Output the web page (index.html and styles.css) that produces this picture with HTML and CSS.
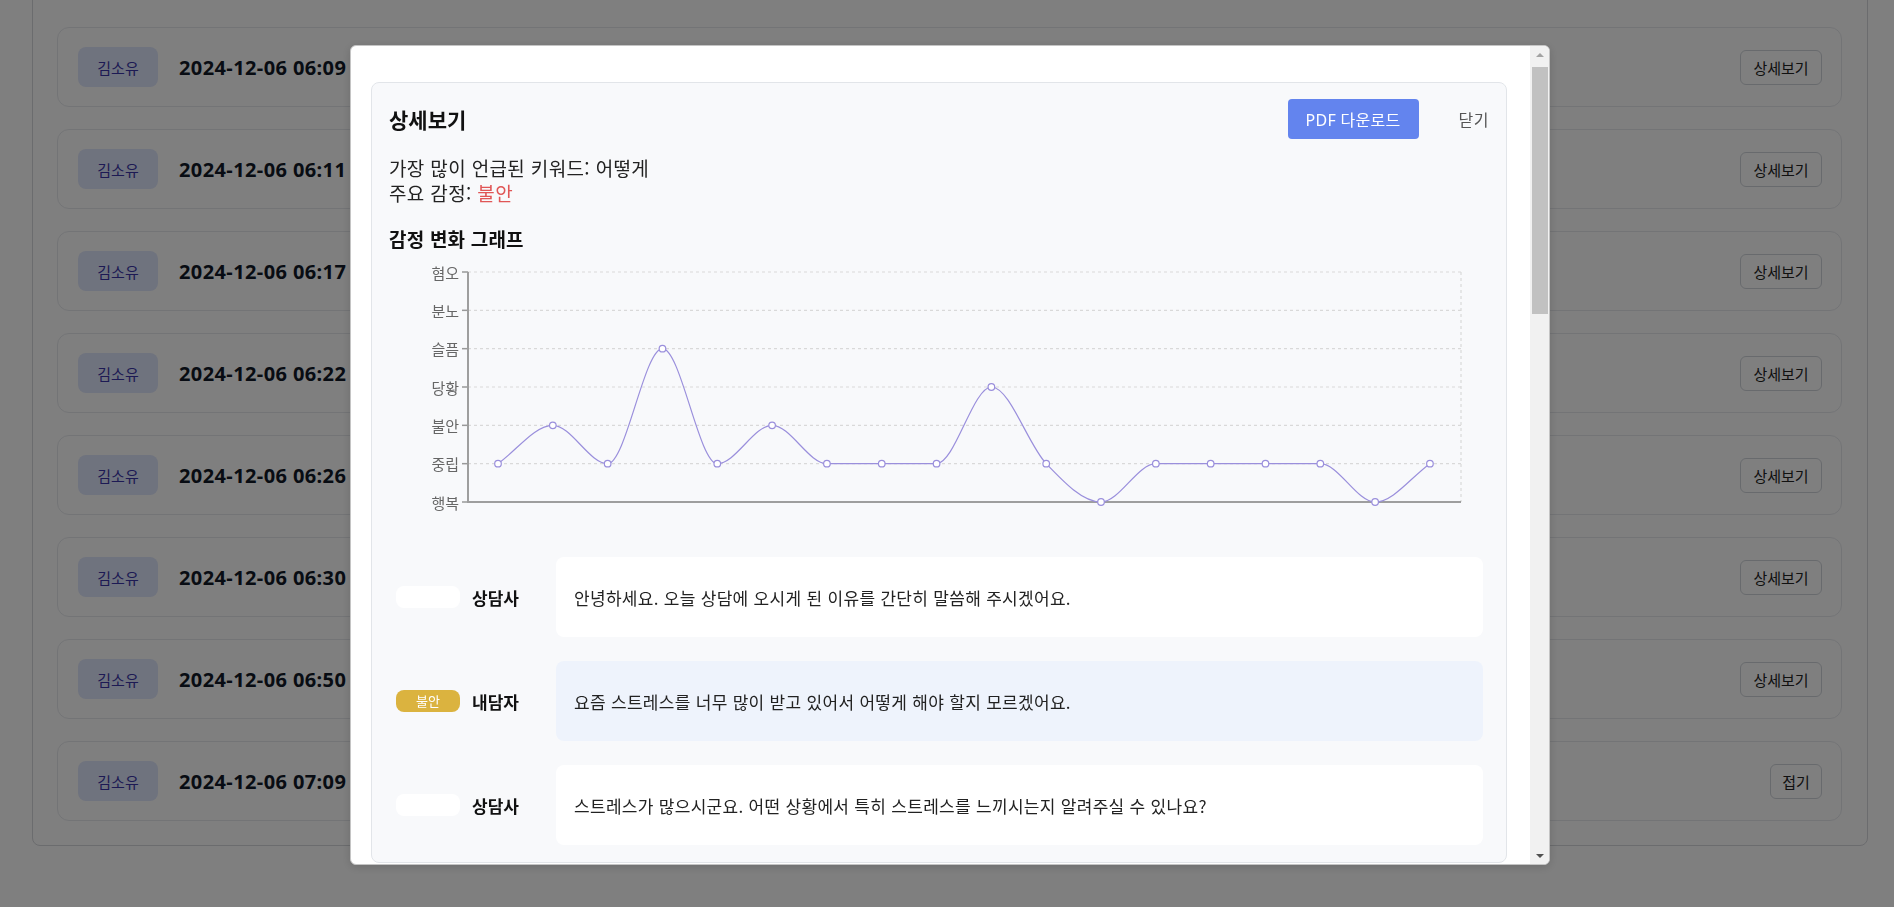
FILE: index.html
```html
<!DOCTYPE html>
<html lang="ko">
<head>
<meta charset="utf-8">
<title>상담 기록</title>
<link rel="stylesheet" href="styles.css">
</head>
<body>
<div class="page">
  <div class="list">
    <div class="card"><span class="name">김소유</span><span class="date">2024-12-06 06:09</span><button class="btn-outline">상세보기</button></div>
    <div class="card"><span class="name">김소유</span><span class="date">2024-12-06 06:11</span><button class="btn-outline">상세보기</button></div>
    <div class="card"><span class="name">김소유</span><span class="date">2024-12-06 06:17</span><button class="btn-outline">상세보기</button></div>
    <div class="card"><span class="name">김소유</span><span class="date">2024-12-06 06:22</span><button class="btn-outline">상세보기</button></div>
    <div class="card"><span class="name">김소유</span><span class="date">2024-12-06 06:26</span><button class="btn-outline">상세보기</button></div>
    <div class="card"><span class="name">김소유</span><span class="date">2024-12-06 06:30</span><button class="btn-outline">상세보기</button></div>
    <div class="card"><span class="name">김소유</span><span class="date">2024-12-06 06:50</span><button class="btn-outline">상세보기</button></div>
    <div class="card"><span class="name">김소유</span><span class="date">2024-12-06 07:09</span><button class="btn-outline btn-fold">접기</button></div>
  </div>
</div>

<div class="overlay">
  <div class="modal">
    <div class="modal-body">
      <div class="panel">
        <div class="panel-head">
          <h2 class="panel-title">상세보기</h2>
          <div class="head-actions">
            <button class="btn-primary">PDF 다운로드</button>
            <button class="btn-text">닫기</button>
          </div>
        </div>
        <div class="summary">
          <p>가장 많이 언급된 키워드: 어떻게</p>
          <p>주요 감정: <span class="emo-red">불안</span></p>
        </div>
        <h3 class="chart-title">감정 변화 그래프</h3>
        <svg class="chart" width="1100" height="267" viewBox="0 0 1100 267">
          <g class="grid">
            <line x1="79" y1="20" x2="1072" y2="20"/>
            <line x1="79" y1="58.33" x2="1072" y2="58.33"/>
            <line x1="79" y1="96.67" x2="1072" y2="96.67"/>
            <line x1="79" y1="135" x2="1072" y2="135"/>
            <line x1="79" y1="173.33" x2="1072" y2="173.33"/>
            <line x1="79" y1="211.67" x2="1072" y2="211.67"/>
            <line x1="1072" y1="20" x2="1072" y2="250"/>
          </g>
          <g class="ticks">
            <line x1="73" y1="20" x2="79" y2="20"/>
            <line x1="73" y1="58.33" x2="79" y2="58.33"/>
            <line x1="73" y1="96.67" x2="79" y2="96.67"/>
            <line x1="73" y1="135" x2="79" y2="135"/>
            <line x1="73" y1="173.33" x2="79" y2="173.33"/>
            <line x1="73" y1="211.67" x2="79" y2="211.67"/>
            <line x1="73" y1="250" x2="79" y2="250"/>
          </g>
          <g class="axis">
            <line x1="79" y1="20" x2="79" y2="251"/>
            <line x1="78" y1="250" x2="1072" y2="250"/>
          </g>
          <g class="labels">
            <text x="70" y="20">혐오</text>
            <text x="70" y="58.33">분노</text>
            <text x="70" y="96.67">슬픔</text>
            <text x="70" y="135">당황</text>
            <text x="70" y="173.33">불안</text>
            <text x="70" y="211.67">중립</text>
            <text x="70" y="250">행복</text>
          </g>
          <g id="series" class="series"></g>
        </svg>
        <div class="messages">
          <div class="msg">
            <div class="who"><span class="tag"></span><span class="role">상담사</span></div>
            <div class="bubble">안녕하세요. 오늘 상담에 오시게 된 이유를 간단히 말씀해 주시겠어요.</div>
          </div>
          <div class="msg">
            <div class="who"><span class="tag tag-anxious">불안</span><span class="role">내담자</span></div>
            <div class="bubble bubble-client">요즘 스트레스를 너무 많이 받고 있어서 어떻게 해야 할지 모르겠어요.</div>
          </div>
          <div class="msg">
            <div class="who"><span class="tag"></span><span class="role">상담사</span></div>
            <div class="bubble">스트레스가 많으시군요. 어떤 상황에서 특히 스트레스를 느끼시는지 알려주실 수 있나요?</div>
          </div>
        </div>
      </div>
    </div>
    <div class="scrollbar">
      <div class="sb-btn"><span class="arrow-up"></span></div>
      <div class="sb-track"><div class="sb-thumb"></div></div>
      <div class="sb-btn"><span class="arrow-down"></span></div>
    </div>
  </div>
</div>
<script src="script.js"></script>
</body>
</html>
```

FILE: styles.css
```css
* { box-sizing: border-box; }
html, body { margin: 0; padding: 0; }
body {
  font-family: "Noto Sans", "Noto Sans CJK KR", sans-serif;
  background: #fff;
  color: #111;
  height: 907px;
  overflow: hidden;
}
button { font-family: inherit; cursor: pointer; }

/* background list */
.page { padding: 0 26px 0 32px; }
.list {
  margin-top: -20px;
  border: 1px solid #d6d8dc;
  border-radius: 8px;
  padding: 46px 25px 24px 24px;
  display: flex;
  flex-direction: column;
  gap: 22px;
  background: #fff;
}
.card {
  display: flex;
  align-items: center;
  height: 80px;
  border: 1px solid #e7e9ed;
  border-radius: 12px;
  padding: 0 19px 0 20px;
  background: #fff;
}
.name {
  width: 80px;
  height: 40px;
  border-radius: 8px;
  background: #dfe6fc;
  color: #3a35a8;
  font-family: "Noto Sans CJK KR", sans-serif;
  font-size: 15px;
  display: flex;
  align-items: center;
  justify-content: center;
}
.date {
  margin-left: 21px;
  font-weight: 700;
  font-size: 20px;
  letter-spacing: 0.4px;
  color: #111827;
}
.btn-outline {
  margin-left: auto;
  height: 35px;
  width: 82px;
  border: 1px solid #d1d5db;
  border-radius: 6px;
  background: #fff;
  color: #222;
  font-family: "Noto Sans CJK KR", sans-serif;
  font-size: 15px;
  padding: 0;
}
.btn-fold { width: 52px; }

/* overlay + modal */
.overlay {
  position: fixed;
  inset: 0;
  background: rgba(0, 0, 0, 0.5);
  display: flex;
  justify-content: center;
  align-items: flex-start;
  padding: 45px 0 0 6px;
}
.modal {
  width: 1200px;
  height: 820px;
  background: #fff;
  border: 1px solid #c4c4c4;
  border-radius: 6px;
  display: flex;
  overflow: hidden;
  box-shadow: 0 2px 10px rgba(0, 0, 0, 0.15);
}
.modal-body {
  flex: 1;
  overflow: hidden;
  padding: 36px 23px 0 20px;
  font-family: "Noto Sans CJK KR", sans-serif;
}
.panel {
  background: #f8f9fb;
  border: 1px solid #e2e5e9;
  border-radius: 8px;
  padding: 16px 17px 17px 17px;
}
.panel-head {
  display: flex;
  align-items: center;
  justify-content: space-between;
  height: 40px;
}
.panel-title {
  margin: 0;
  font-size: 21px;
  font-weight: 700;
  line-height: 40px;
  color: #111;
}
.head-actions {
  display: flex;
  align-items: center;
  gap: 40px;
}
.btn-primary {
  height: 40px;
  width: 131px;
  padding: 0;
  border: none;
  border-radius: 4px;
  background: #6384ee;
  color: #fff;
  font-size: 16px;
  letter-spacing: 0.3px;
  font-family: "Noto Sans", "Noto Sans CJK KR", sans-serif;
}
.btn-text {
  border: none;
  background: none;
  padding: 0;
  font-size: 16px;
  letter-spacing: 0.5px;
  color: #555;
  font-family: "Noto Sans CJK KR", sans-serif;
}
.summary { margin-top: 16px; }
.summary p {
  margin: 0;
  font-size: 19px;
  letter-spacing: 0.35px;
  line-height: 25px;
  color: #222;
}
.emo-red { color: #e05656; }
.chart-title {
  margin: 21px 0 1px;
  font-size: 19px;
  letter-spacing: 0.2px;
  font-weight: 700;
  line-height: 25px;
  color: #111;
}
.chart { display: block; }
.chart .grid line { stroke: #d9d9d9; stroke-width: 1.2; stroke-dasharray: 3 3; }
.chart .ticks line { stroke: #999; stroke-width: 1.5; }
.chart .axis line { stroke: #9e9e9e; stroke-width: 2; }
.chart .labels text {
  font-family: "Noto Sans CJK KR", sans-serif;
  font-size: 15px;
  fill: #666;
  text-anchor: end;
  dominant-baseline: central;
}
.chart .series path { fill: none; stroke: #9a8fdc; stroke-width: 1.2; }
.chart .series circle { fill: #fff; stroke: #9a8fdc; stroke-width: 1.2; }

.messages {
  margin-top: 38px;
  display: flex;
  flex-direction: column;
  gap: 24px;
}
.msg { display: flex; align-items: center; }
.who {
  width: 167px;
  flex: none;
  display: flex;
  align-items: center;
  gap: 12px;
  padding-left: 7px;
}
.tag {
  width: 64px;
  height: 22px;
  border-radius: 8px;
  background: #fff;
  color: #fff;
  font-size: 13px;
  line-height: 22px;
  text-align: center;
}
.tag-anxious { background: #dbb33f; }
.role { font-size: 17px; font-weight: 700; color: #111; }
.bubble {
  flex: 1;
  height: 80px;
  margin-right: 6px;
  background: #fff;
  border-radius: 8px;
  display: flex;
  align-items: center;
  padding: 0 18px;
  font-size: 17px;
  letter-spacing: 0.3px;
  color: #222;
}
.bubble-client { background: #eef3fc; }

/* fake scrollbar */
.scrollbar {
  width: 19px;
  flex: none;
  background: #f1f1f1;
  display: flex;
  flex-direction: column;
}
.sb-btn {
  height: 17px;
  display: flex;
  align-items: center;
  justify-content: center;
}
.arrow-up {
  width: 0; height: 0;
  border-left: 4px solid transparent;
  border-right: 4px solid transparent;
  border-bottom: 4px solid #a3a3a3;
}
.arrow-down {
  width: 0; height: 0;
  border-left: 4px solid transparent;
  border-right: 4px solid transparent;
  border-top: 4px solid #505050;
}
.sb-track { flex: 1; padding: 4px 1px 0 2px; }
.sb-thumb { height: 247px; background: #c1c1c1; }
```

FILE: script.js
```js
(function () {
  var data = [1, 2, 1, 4, 1, 2, 1, 1, 1, 3, 1, 0, 1, 1, 1, 1, 0, 1];
  var x0 = 109, dx = 54.82, yb = 250, dy = 230 / 6;
  var pts = data.map(function (v, i) { return { x: x0 + i * dx, y: yb - v * dy }; });
  var n = pts.length;
  // monotone cubic interpolation (Fritsch-Carlson)
  var delta = [], m = [];
  for (var i = 0; i < n - 1; i++) {
    delta[i] = (pts[i + 1].y - pts[i].y) / (pts[i + 1].x - pts[i].x);
  }
  for (i = 0; i < n; i++) {
    if (i === 0) m[i] = delta[0];
    else if (i === n - 1) m[i] = delta[n - 2];
    else if (Math.sign(delta[i - 1]) !== Math.sign(delta[i])) m[i] = 0;
    else m[i] = (delta[i - 1] + delta[i]) / 2;
  }
  for (i = 0; i < n - 1; i++) {
    if (delta[i] === 0) { m[i] = 0; m[i + 1] = 0; continue; }
    var a = m[i] / delta[i], b = m[i + 1] / delta[i], s = a * a + b * b;
    if (s > 9) {
      var tau = 3 / Math.sqrt(s);
      m[i] = a * tau * delta[i];
      m[i + 1] = b * tau * delta[i];
    }
  }
  var d = 'M' + pts[0].x + ' ' + pts[0].y;
  for (i = 0; i < n - 1; i++) {
    var h = (pts[i + 1].x - pts[i].x) / 3;
    d += ' C' + (pts[i].x + h) + ' ' + (pts[i].y + h * m[i]) + ' ' +
      (pts[i + 1].x - h) + ' ' + (pts[i + 1].y - h * m[i + 1]) + ' ' +
      pts[i + 1].x + ' ' + pts[i + 1].y;
  }
  var ns = 'http://www.w3.org/2000/svg';
  var g = document.getElementById('series');
  var path = document.createElementNS(ns, 'path');
  path.setAttribute('d', d);
  g.appendChild(path);
  pts.forEach(function (p) {
    var c = document.createElementNS(ns, 'circle');
    c.setAttribute('cx', p.x);
    c.setAttribute('cy', p.y);
    c.setAttribute('r', 3.3);
    g.appendChild(c);
  });
})();
```
